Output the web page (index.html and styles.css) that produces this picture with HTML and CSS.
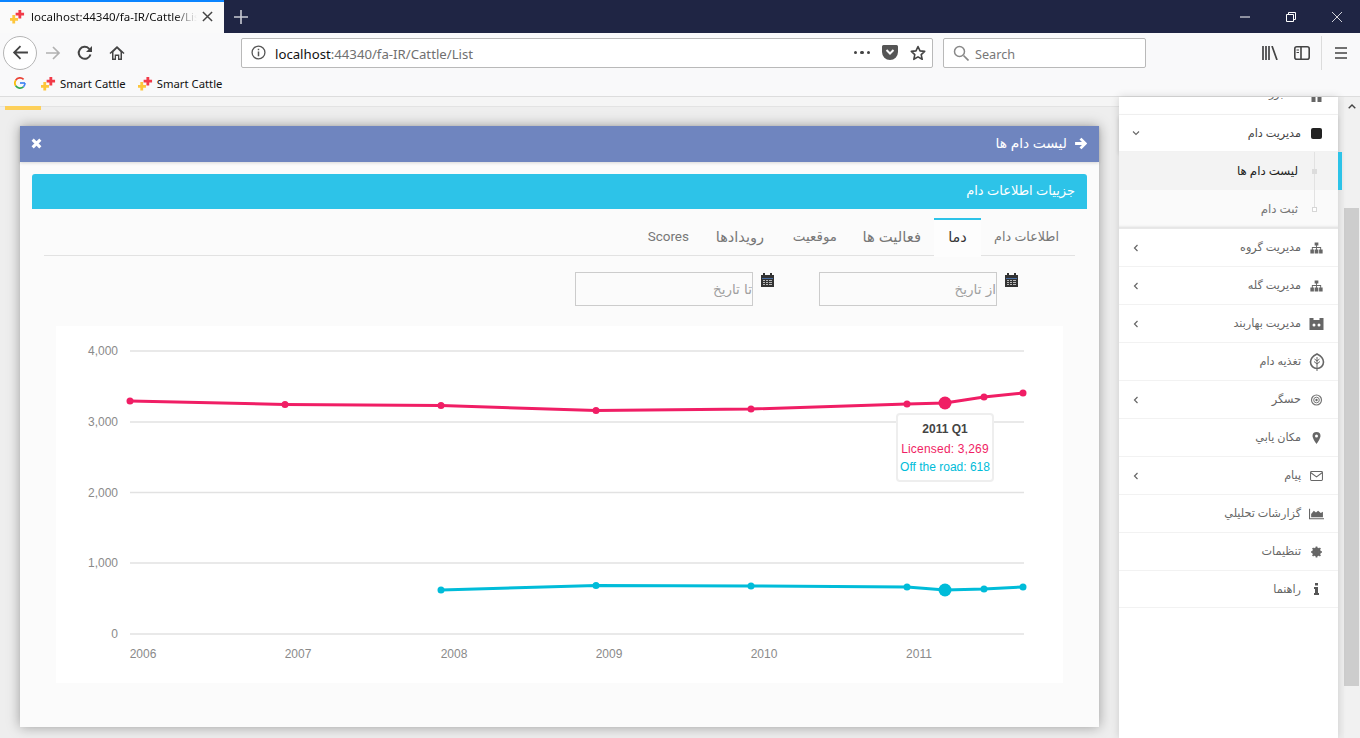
FILE: index.html
```html
<!DOCTYPE html>
<html lang="fa">
<head>
<meta charset="utf-8">
<title>Smart Cattle</title>
<link rel="stylesheet" href="styles.css">
</head>
<body>
<svg class="sprite" width="0" height="0" aria-hidden="true">
  <symbol id="fav" viewBox="0 0 16 16">
    <path fill="#fdc63c" d="M2.500 7.500h3v3h3v3h-3v3h-3v-3h-3v-3h3z" transform="translate(0 -1)"/>
    <path fill="#f23a48" d="M8 1h3v3h3v3h-3v3H8V7H5V4h3z" transform="translate(1 0)"/>
  </symbol>
  <symbol id="sitemap" viewBox="0 0 14 12">
    <path fill="#666" d="M5 0h4v3.400H7.500V5H12v2.600h1.600V12h-3.800V7.600H11V6H7.500v1.600H9V12H5V7.600h1.500V6H3v1.600h1.200V12H.4V7.600H2V5h4.500V3.400H5z"/>
  </symbol>
  <symbol id="chev-l" viewBox="0 0 6 8"><path fill="none" stroke="#666" stroke-width="1.200" d="M4.500 1 1.500 4l3 3"/></symbol>
  <symbol id="cal" viewBox="0 0 13 14">
    <path fill="#333" d="M0 2h2V0h2v2h5V0h2v2h2v12H0z"/>
    <path fill="#4a6fa5" d="M1 5h11v1H1z"/>
    <path fill="#b9b9b9" d="M2 7h2v1H2zm3 0h2v1H5zm3 0h3v1H8zm-6 2h2v1H2zm3 0h2v1H5zm3 0h3v1H8zm-6 2h2v1H2zm3 0h2v1H5zm3 0h3v1H8z"/>
  </symbol>
</svg>

<div class="tabstrip">
  <div class="tab">
    <svg class="fav"><use href="#fav"/></svg>
    <span class="tab-title">localhost:44340/fa-IR/Cattle/List</span>
    <svg class="tab-x" viewBox="0 0 12 12"><path d="M1 1l10 10M11 1 1 11" stroke="#444" stroke-width="1.600"/></svg>
  </div>
  <svg class="newtab" viewBox="0 0 14 14"><path d="M7 0v14M0 7h14" stroke="#c9cbd4" stroke-width="1.600"/></svg>
  <div class="winctl">
    <svg viewBox="0 0 10 10"><path d="M0 5h10" stroke="#fff"/></svg>
    <svg viewBox="0 0 10 10"><path d="M.5 2.500h7v7h-7zM2.500 2.500v-2h7v7h-2" fill="none" stroke="#fff"/></svg>
    <svg viewBox="0 0 10 10"><path d="M0 0l10 10M10 0 0 10" stroke="#fff" stroke-width=".8"/></svg>
  </div>
</div>

<div class="navbar">
  <div class="back"><svg viewBox="0 0 16 16"><path d="M15 8H2M8 2 2 8l6 6" fill="none" stroke="#444" stroke-width="1.700"/></svg></div>
  <svg class="nav-ic fwd" viewBox="0 0 16 16"><path d="M1 8h13M8 2l6 6-6 6" fill="none" stroke="#b1b1b1" stroke-width="1.700"/></svg>
  <svg class="nav-ic reload" viewBox="0 0 16 16"><path d="M13.500 9.500A6 6 0 1 1 12 3.600L14 5.500" fill="none" stroke="#444" stroke-width="2"/><path d="M15 1v6H9z" fill="#444"/></svg>
  <svg class="nav-ic home" viewBox="0 0 16 16"><path d="M8 1 .5 8l1 1L3 7.800V15h4v-4h2v4h4V7.800L14.500 9l1-1z" fill="#444"/><path d="M8 3.500 11.500 7v6.500H10.300V9.500H5.700v4H4.500V7z" fill="#f9f9fa"/></svg>
  <div class="urlbar">
    <svg class="info" viewBox="0 0 14 14"><circle cx="7" cy="7" r="6" fill="none" stroke="#555" stroke-width="1.200"/><path d="M7 6v4.500M7 3.500v1.400" stroke="#555" stroke-width="1.400"/></svg>
    <span class="url">localhost<span class="url-dim">:44340/fa-IR/Cattle/List</span></span>
    <span class="dots"><i></i><i></i><i></i></span>
    <svg class="pocket" viewBox="0 0 16 15"><path d="M1.500 0h13A1.500 1.500 0 0 1 16 1.500V7A8 8 0 0 1 0 7V1.500A1.500 1.500 0 0 1 1.500 0z" fill="#555"/><path d="M4.500 5 8 8.500 11.500 5" fill="none" stroke="#f9f9fa" stroke-width="2"/></svg>
    <svg class="star" viewBox="0 0 16 16"><path d="M8 1.500l2 4.400 4.700.5-3.500 3.200 1 4.700L8 11.900l-4.200 2.400 1-4.700L1.300 6.400 6 5.900z" fill="none" stroke="#444" stroke-width="1.600" stroke-linejoin="round"/></svg>
  </div>
  <div class="searchbar">
    <svg viewBox="0 0 16 16"><circle cx="6.500" cy="6.500" r="5" fill="none" stroke="#888" stroke-width="1.500"/><path d="M10.500 10.500 15.500 15.500" stroke="#888" stroke-width="1.700"/></svg>
    <span>Search</span>
  </div>
  <svg class="tool lib" viewBox="0 0 16 14"><path d="M1 0v14M4 0v14M7 0v14M10 0l5 14" stroke="#444" stroke-width="1.700" fill="none"/></svg>
  <svg class="tool side" viewBox="0 0 16 14"><rect x=".8" y=".8" width="14.400" height="12.400" rx="2" fill="none" stroke="#444" stroke-width="1.600"/><path d="M7 1v12" stroke="#444" stroke-width="1.600"/><path d="M2.500 4H5M2.500 6.500H5" stroke="#444"/></svg>
  <span class="sep"></span>
  <svg class="tool menu" viewBox="0 0 12 12"><path d="M0 1h12M0 6h12M0 11h12" stroke="#444" stroke-width="1.500"/></svg>
</div>

<div class="bookmarks">
  <svg class="g" viewBox="0 0 14 14">
    <path d="M12.800 7H7" stroke="#4285f4" stroke-width="2" fill="none"/>
    <path d="M11.200 2.800A6 6 0 0 0 2 3.800" stroke="#ea4335" stroke-width="2" fill="none"/>
    <path d="M2 3.800A6 6 0 0 0 2 10.200" stroke="#fbbc05" stroke-width="2" fill="none"/>
    <path d="M2 10.200A6 6 0 0 0 11 11.500" stroke="#34a853" stroke-width="2" fill="none"/>
    <path d="M11 11.500A6 6 0 0 0 12.800 7" stroke="#4285f4" stroke-width="2" fill="none"/>
  </svg>
  <span class="bm"><svg class="fav"><use href="#fav"/></svg>Smart Cattle</span>
  <span class="bm"><svg class="fav"><use href="#fav"/></svg>Smart Cattle</span>
</div>

<div class="page">
  <main class="main">
    <div class="strip"></div>
    <div class="accent"></div>
    <section class="panel">
      <header class="panel-head">
        <svg class="head-arrow" viewBox="0 0 12 12"><path d="M1 6h9M6 1.500 10.500 6 6 10.500" fill="none" stroke="#fff" stroke-width="2.600"/></svg>
        <span>لیست دام ها</span>
        <svg class="head-x" viewBox="0 0 10 10"><path d="M1.500 1.500l7 7M8.500 1.500l-7 7" stroke="#fff" stroke-width="2.800"/></svg>
      </header>
      <div class="panel-body">
        <div class="title-bar">جزییات اطلاعات دام</div>
        <nav class="tabs">
          <a class="t t1">اطلاعات دام</a>
          <a class="t t2 active">دما</a>
          <a class="t t3">فعالیت ها</a>
          <a class="t t4">موقعیت</a>
          <a class="t t5">رویدادها</a>
          <a class="t t6">Scores</a>
        </nav>
        <div class="dates">
          <label class="date"><svg class="cal"><use href="#cal"/></svg><input type="text" placeholder="از تاریخ"></label>
          <label class="date"><svg class="cal"><use href="#cal"/></svg><input type="text" placeholder="تا تاریخ"></label>
        </div>
        <div class="chart">
          <svg class="chart-svg" width="1007" height="357" viewBox="56 326 1007 357">
            <g stroke="#e2e2e2" stroke-width="1.500">
              <path d="M130 351H1024M130 422H1024M130 492.500H1024M130 563H1024M130 634H1024"/>
            </g>
            <g class="ax" text-anchor="end">
              <text x="118" y="355">4,000</text>
              <text x="118" y="426">3,000</text>
              <text x="118" y="497">2,000</text>
              <text x="118" y="567">1,000</text>
              <text x="118" y="638">0</text>
            </g>
            <g class="ax" text-anchor="middle">
              <text x="143" y="658">2006</text>
              <text x="298" y="658">2007</text>
              <text x="454" y="658">2008</text>
              <text x="609" y="658">2009</text>
              <text x="764" y="658">2010</text>
              <text x="919" y="658">2011</text>
            </g>
            <path fill="none" stroke="#f01e65" stroke-width="3" d="M130 401 285 404.500 441 405.500 596 410.500 751 409 907 404 945 403 984 397 1023 393"/>
            <g fill="#f01e65">
              <circle cx="130" cy="401" r="3.500"/><circle cx="285" cy="404.500" r="3.500"/><circle cx="441" cy="405.500" r="3.500"/><circle cx="596" cy="410.500" r="3.500"/><circle cx="751" cy="409" r="3.500"/><circle cx="907" cy="404" r="3.500"/><circle cx="945" cy="403" r="6.500"/><circle cx="984" cy="397" r="3.500"/><circle cx="1023" cy="393" r="3.500"/>
            </g>
            <path fill="none" stroke="#00bcd9" stroke-width="3" d="M441 590 596 585.500 751 586 907 587 945 590 984 589 1023 587"/>
            <g fill="#00bcd9">
              <circle cx="441" cy="590" r="3.500"/><circle cx="596" cy="585.500" r="3.500"/><circle cx="751" cy="586" r="3.500"/><circle cx="907" cy="587" r="3.500"/><circle cx="945" cy="590" r="6.500"/><circle cx="984" cy="589" r="3.500"/><circle cx="1023" cy="587" r="3.500"/>
            </g>
          </svg>
          <div class="tooltip">
            <b>2011 Q1</b>
            <span class="pink">Licensed: 3,269</span>
            <span class="cyan">Off the road: 618</span>
          </div>
        </div>
      </div>
    </section>
  </main>

  <aside class="sidebar" dir="rtl">
    <div class="row first">
      <svg class="ic" viewBox="0 0 12 12"><path fill="#666" d="M1 0h4v5H1zM7 0h4v5H7zM1 7h4v5H1zM7 7h4v5H7z"/></svg>
      <span>داشبورد</span>
    </div>
    <div class="row open">
      <span class="ic"><i class="square"></i></span>
      <span>مدیریت دام</span>
      <svg class="chev-d" viewBox="0 0 8 6"><path fill="none" stroke="#666" stroke-width="1.100" d="M1 1.500l3 3 3-3"/></svg>
    </div>
    <div class="sub">
      <div class="sub-row on"><i class="bullet"></i><span>لیست دام ها</span></div>
      <div class="sub-row"><i class="bullet hollow"></i><span>ثبت دام</span></div>
    </div>
    <div class="row"><svg class="ic"><use href="#sitemap"/></svg><span>مدیریت گروه</span><svg class="chev"><use href="#chev-l"/></svg></div>
    <div class="row"><svg class="ic"><use href="#sitemap"/></svg><span>مدیریت گله</span><svg class="chev"><use href="#chev-l"/></svg></div>
    <div class="row"><svg class="ic wide" viewBox="0 0 14 12"><path fill="#666" d="M0 0h4v2h6V0h4v12H0z"/><circle cx="4.500" cy="7" r="1.500" fill="#fff"/><circle cx="9.500" cy="7" r="1.500" fill="#fff"/></svg><span>مدیریت بهاربند</span><svg class="chev"><use href="#chev-l"/></svg></div>
    <div class="row"><svg class="ic big" viewBox="0 0 16 18"><path d="M8 1C4 3 1.500 5.500 1.500 9a6.500 6.500 0 0 0 13 0C14.500 5.500 12 3 8 1z" fill="none" stroke="#666" stroke-width="1.600"/><path d="M8 4v14M8 8 5.500 6M8 8l2.500-2M8 11 5 8.500M8 11l3-2.500" stroke="#666" fill="none"/></svg><span>تغذیه دام</span></div>
    <div class="row"><svg class="ic" viewBox="0 0 12 12"><circle cx="6" cy="6" r="5" fill="none" stroke="#777" stroke-width="1.200"/><circle cx="6" cy="6" r="2.800" fill="none" stroke="#777"/><circle cx="6" cy="6" r="1.200" fill="#666"/></svg><span>حسگر</span><svg class="chev"><use href="#chev-l"/></svg></div>
    <div class="row"><svg class="ic" viewBox="0 0 12 12"><path fill="#666" fill-rule="evenodd" d="M6 0a4 4 0 0 1 4 4c0 2.500-4 8-4 8S2 6.500 2 4a4 4 0 0 1 4-4zm0 2.500a1.500 1.500 0 1 0 0 3 1.500 1.500 0 0 0 0-3z"/></svg><span>مکان یابي</span></div>
    <div class="row"><svg class="ic" viewBox="0 0 14 11"><rect x=".6" y=".6" width="12.800" height="9.800" rx="1" fill="none" stroke="#666" stroke-width="1.100"/><path d="M1 2l6 4.500L13 2" fill="none" stroke="#666" stroke-width="1.100"/></svg><span>پیام</span><svg class="chev"><use href="#chev-l"/></svg></div>
    <div class="row"><svg class="ic wide" viewBox="0 0 14 10"><path fill="#666" d="M0 0h1v9h13v1H0zM2 8V5l2.500-3L6.500 3.500 8.500 2 11 4l2-1v5z"/></svg><span>گزارشات تحلیلي</span></div>
    <div class="row"><svg class="ic" viewBox="0 0 12 12"><circle cx="6" cy="6" r="3.200" fill="none" stroke="#666" stroke-width="2.400"/><path d="M6 .5v11M.5 6h11M2.100 2.100l7.800 7.800M9.900 2.100l-7.800 7.800" stroke="#666" stroke-width="1.700"/></svg><span>تنظیمات</span></div>
    <div class="row last"><svg class="ic" viewBox="0 0 12 12"><path fill="#555" d="M4.500 0h3v2.400h-3zM3.500 4h4v6h1v2h-5v-2h1V6h-1z"/></svg><span>راهنما</span></div>
  </aside>

  <div class="scrollbar">
    <svg class="sb-up" viewBox="0 0 8 5"><path d="M.7 4.300 4 1l3.300 3.300" fill="none" stroke="#444" stroke-width="1.400"/></svg>
    <div class="sb-thumb"></div>
  </div>
</div>
</body>
</html>
```

FILE: styles.css
```css
* { box-sizing: border-box; }
html, body { margin: 0; height: 100%; }
body {
  width: 1360px;
  height: 738px;
  overflow: hidden;
  display: flex;
  flex-direction: column;
  font-family: "Noto Sans", "DejaVu Sans", sans-serif;
  background: #eee;
}
.sprite { position: absolute; }

/* browser chrome */
.tabstrip {
  height: 33px;
  flex: none;
  display: flex;
  align-items: center;
  background: #1f2544;
}
.tab {
  width: 224px;
  height: 33px;
  display: flex;
  align-items: center;
  background: #fafafa;
  border-top: 2px solid #0a84ff;
  padding: 0 11px 2px 10px;
}
.fav { width: 15px; height: 15px; flex: none; }
.tab-title {
  width: 166px;
  margin-left: 6px;
  font-size: 11.500px;
  color: #111;
  white-space: nowrap;
  overflow: hidden;
  -webkit-mask-image: linear-gradient(to right, #000 86%, transparent);
  mask-image: linear-gradient(to right, #000 86%, transparent);
}
.tab-x { width: 11px; height: 11px; margin-left: auto; flex: none; }
.newtab { width: 14px; height: 14px; margin-left: 10px; }
.winctl { margin-left: auto; display: flex; gap: 36px; padding-right: 18px; }
.winctl svg { width: 10px; height: 10px; }

.navbar {
  height: 39px;
  flex: none;
  display: flex;
  align-items: center;
  background: #f9f9fa;
  padding: 0 12px 0 3px;
}
.back {
  width: 34px;
  height: 34px;
  border: 1px solid #b5b5b5;
  border-radius: 50%;
  background: #fff;
  display: flex;
  align-items: center;
  justify-content: center;
}
.back svg { width: 17px; height: 17px; }
.nav-ic { width: 16px; height: 16px; flex: none; }
.fwd { margin-left: 8px; }
.reload { margin-left: 16px; }
.home { margin-left: 16px; }
.urlbar {
  width: 692px;
  height: 30px;
  margin-left: 116px;
  display: flex;
  align-items: center;
  background: #fff;
  border: 1px solid #b9b9b9;
  border-radius: 2px;
  padding: 0 6px 0 9px;
}
.info { width: 15px; height: 15px; flex: none; }
.url { margin-left: 9px; padding-top: 2px; font-size: 13.200px; color: #111; white-space: nowrap; }
.url-dim { color: #707070; }
.dots { margin-left: auto; display: flex; gap: 3px; }
.dots i { width: 3.500px; height: 3.500px; border-radius: 50%; background: #444; display: block; }
.pocket { width: 16px; height: 15px; margin-left: 12px; }
.star { width: 16px; height: 16px; margin-left: 12px; }
.searchbar {
  width: 203px;
  height: 30px;
  margin-left: 10px;
  display: flex;
  align-items: center;
  gap: 6px;
  background: #fff;
  border: 1px solid #b9b9b9;
  border-radius: 2px;
  padding-left: 9px;
  font-size: 12.700px;
  color: #777;
}
.searchbar span { padding-top: 2px; }
.searchbar svg { width: 16px; height: 16px; }
.tool { flex: none; }
.lib { width: 16px; height: 14px; margin-left: 116px; }
.side { width: 16px; height: 14px; margin-left: 16px; }
.sep { width: 1px; height: 34px; background: #dcdcdc; margin-left: 11px; }
.menu { width: 12px; height: 12px; margin-left: 13px; }

.bookmarks {
  height: 25px;
  flex: none;
  display: flex;
  align-items: center;
  background: #f9f9fa;
  border-bottom: 1px solid #ddd;
  padding: 0 0 2px 14px;
  font-size: 11.300px;
  color: #111;
}
.g { width: 12px; height: 12px; margin-right: 15px; }
.bm { display: flex; align-items: center; gap: 4px; margin-right: 12px; }
.bm .fav { width: 15px; height: 15px; }

/* page */
.page { flex: 1; min-height: 0; display: flex; }
.main { width: 1119px; flex: none; position: relative; background: #eee; }
.strip { height: 10px; background: #f5f5f5; border-bottom: 1px solid #e3e3e3; }
.accent { width: 36px; height: 4px; margin-left: 5px; margin-top: -1px; background: #fdd05a; }
.panel {
  width: 1079px;
  height: 601px;
  margin: 16px 0 0 20px;
  background: #fbfbfb;
  box-shadow: 0 0 12px rgba(0,0,0,.35);
  display: flex;
  flex-direction: column;
}
.panel-head {
  height: 36px;
  flex: none;
  display: flex;
  flex-direction: row-reverse;
  align-items: center;
  padding: 0 12px 2px 11px;
  background: #6f85bf;
  color: #fff;
  font-size: 13.800px;
  box-shadow: 0 1px 3px rgba(0,0,0,.15);
}
.panel-head span { margin-top: -2px; }
.head-arrow { width: 13px; height: 13px; margin-left: 7px; }
.head-x { width: 11px; height: 11px; margin-right: auto; }
.panel-body { flex: 1; padding: 12px 12px 0; display: flex; flex-direction: column; }
.title-bar {
  height: 35px;
  flex: none;
  background: #2dc3e8;
  border-radius: 3px 3px 0 0;
  color: #fff;
  font-size: 13px;
  line-height: 33px;
  text-align: right;
  padding-right: 12px;
  direction: rtl;
}
.tabs {
  height: 47px;
  flex: none;
  margin: 0 12px;
  padding: 9px 4px 0 0;
  display: flex;
  direction: rtl;
  border-bottom: 1px solid #e2e2e2;
  font-size: 14px;
  color: #777;
  white-space: nowrap;
}
.t {
  height: 38px;
  padding: 0 12px;
  line-height: 33px;
  border-top: 2px solid transparent;
  margin-left: 1px;
  flex: none;
}
.t1 { font-size: 12.700px; width: 89px; }
.t2 { font-size: 14.500px; width: 47px; }
.t3 { font-size: 14.800px; width: 79px; margin-left: 5px; }
.t4 { font-size: 13.400px; width: 68px; margin-left: 5px; }
.t5 { font-size: 14.500px; width: 70px; margin-left: 5px; }
.t.active {
  background: #fdfdfd;
  color: #333;
  border-top-color: #2dc3e8;
  height: 39px;
  padding: 0;
  text-align: center;
}
.t6 { font-family: Roboto, sans-serif; font-size: 13.500px; direction: ltr; }
.dates {
  height: 70px;
  flex: none;
  display: flex;
  direction: rtl;
  gap: 45px;
  padding: 16px 69px 0 0;
}
.date { width: 199px; display: flex; align-items: flex-start; }
.cal { width: 13px; height: 14px; flex: none; margin: 1px 0 0 8px; }
.date input {
  width: 178px;
  height: 34px;
  border: 1px solid #ccc;
  background: transparent;
  padding: 0;
  font: 13.500px "DejaVu Sans", sans-serif;
  direction: rtl;
  outline: none;
}
.date input::placeholder { color: #a0a0a0; }
.chart {
  width: 1007px;
  height: 357px;
  margin-left: 24px;
  position: relative;
  background: #fff;
}
.chart-svg { display: block; }
.ax { font: 12px "Liberation Sans", sans-serif; fill: #8a8a8a; }
.tooltip {
  position: absolute;
  left: 840px;
  top: 87px;
  width: 98px;
  height: 69px;
  background: #fff;
  border: 2px solid #eee;
  border-radius: 4px;
  display: flex;
  flex-direction: column;
  align-items: center;
  padding-top: 5px;
  font: 12px/18px "Liberation Sans", sans-serif;
  white-space: nowrap;
}
.tooltip b { color: #444; margin-bottom: 2px; }
.pink { color: #f01e65; letter-spacing: .2px; }
.cyan { color: #00bcd9; }

/* sidebar */
.sidebar {
  width: 219px;
  flex: none;
  background: #fff;
  box-shadow: 0 0 8px rgba(0,0,0,.15);
  font-size: 11.200px;
  color: #666;
  z-index: 1;
}
.row {
  height: 38px;
  display: flex;
  align-items: center;
  padding: 0 12px 0 14px;
  border-bottom: 1px solid #f2f2f2;
  white-space: nowrap;
}
.row > span:not(.ic) { margin-top: -2px; }
.row.first { height: 18px; align-items: flex-start; overflow: hidden; }
.row.first .ic { margin-top: -7px; }
.row.first > span:not(.ic) { margin-top: -12px; }
.row.open { height: 37px; color: #444; box-shadow: 0 2px 4px rgba(0,0,0,.12); position: relative; }
.row.last { height: 37px; }
.ic { width: 13px; height: 12px; margin: 0 3px 0 9px; flex: none; display: flex; align-items: center; justify-content: center; }
.ic.wide { width: 15px; margin: 0 2px 0 8px; }
.ic.big { width: 16px; height: 18px; margin: 0 1px 0 8px; }
.square { width: 11px; height: 11px; border-radius: 2px; background: #222; display: block; }
.chev { width: 6px; height: 8px; margin-right: auto; flex: none; }
.chev-d { width: 8px; height: 6px; margin-right: auto; margin-left: -1px; flex: none; }
.sub {
  position: relative;
  height: 77px;
  background: #fafafa;
  box-shadow: inset 0 -3px 3px -2px rgba(0,0,0,.12);
  border-bottom: 1px solid #e8e8e8;
}
.sub::before {
  content: "";
  position: absolute;
  right: 23px;
  top: 0;
  height: 57px;
  width: 1px;
  background: #e2e2e2;
  z-index: 1;
}
.sub::after {
  content: "";
  position: absolute;
  top: 0;
  left: 219px;
  width: 4px;
  height: 38px;
  background: #2dc3e8;
}
.sub-row {
  height: 38px;
  display: flex;
  align-items: center;
  padding-right: 21px;
  color: #777;
  position: relative;
  font-size: 11.800px;
}
.sub-row span { margin-top: -2px; }
.sub-row.on { background: #f3f3f3; color: #222; }
.bullet { width: 5px; height: 5px; background: #dcdcdc; flex: none; margin-left: 14px; position: relative; z-index: 2; }
.bullet.hollow { background: #fff; border: 1px solid #d6d6d6; }

/* page scrollbar */
.scrollbar {
  width: 16px;
  margin-left: 6px;
  flex: none;
  background: #f1f1f1;
  display: flex;
  flex-direction: column;
  align-items: center;
  padding-right: 1px;
}
.sb-up { width: 8px; height: 5px; margin-top: 7px; }
.sb-thumb { width: 15px; height: 478px; margin-top: 99px; background: #cdcdcd; }
```
